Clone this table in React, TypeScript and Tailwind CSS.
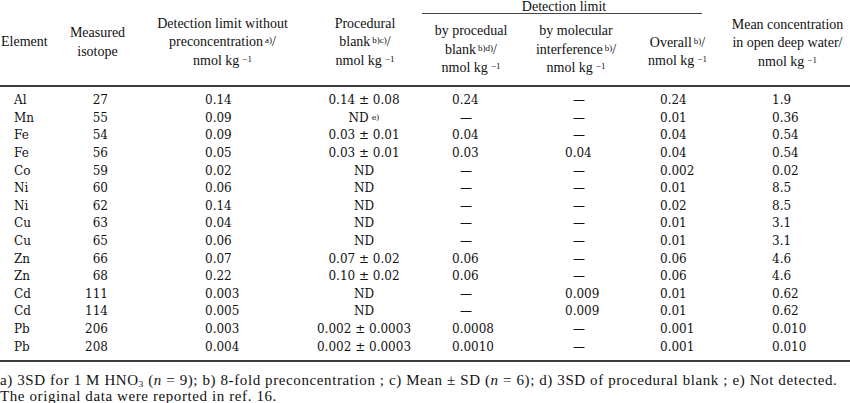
import React from "react";

const hf = { fontFamily: '"Liberation Serif", "Times New Roman", serif' };
const bf = { fontFamily: '"DejaVu Serif", "Liberation Serif", serif' };

type Row = [string, string, string, React.ReactNode, string, string, string, string];

const D = "—";
const rows: Row[] = [
  ["Al", "27", "0.14", "0.14 ± 0.08", "0.24", D, "0.24", "1.9"],
  ["Mn", "55", "0.09", (<span>ND<sup className="text-[8px] ml-[3px] relative -top-[2px]">e)</sup></span>), D, D, "0.01", "0.36"],
  ["Fe", "54", "0.09", "0.03 ± 0.01", "0.04", D, "0.04", "0.54"],
  ["Fe", "56", "0.05", "0.03 ± 0.01", "0.03", "0.04", "0.04", "0.54"],
  ["Co", "59", "0.02", "ND", D, D, "0.002", "0.02"],
  ["Ni", "60", "0.06", "ND", D, D, "0.01", "8.5"],
  ["Ni", "62", "0.14", "ND", D, D, "0.02", "8.5"],
  ["Cu", "63", "0.04", "ND", D, D, "0.01", "3.1"],
  ["Cu", "65", "0.06", "ND", D, D, "0.01", "3.1"],
  ["Zn", "66", "0.07", "0.07 ± 0.02", "0.06", D, "0.06", "4.6"],
  ["Zn", "68", "0.22", "0.10 ± 0.02", "0.06", D, "0.06", "4.6"],
  ["Cd", "111", "0.003", "ND", D, "0.009", "0.01", "0.62"],
  ["Cd", "114", "0.005", "ND", D, "0.009", "0.01", "0.62"],
  ["Pb", "206", "0.003", "0.002 ± 0.0003", "0.0008", D, "0.001", "0.010"],
  ["Pb", "208", "0.004", "0.002 ± 0.0003", "0.0010", D, "0.001", "0.010"],
];

function Sup({ children }: { children: React.ReactNode }) {
  return <sup className="text-[9px] ml-[2px] relative -top-[3px]">{children}</sup>;
}

function Unit() {
  return (
    <span>
      nmol kg<sup className="text-[9px] ml-[3px] relative -top-[3px]">−1</sup>
    </span>
  );
}

const cols = "grid grid-cols-[60px_75px_175px_110px_102px_108px_95px_125px]";

export default function App() {
  return (
    <div className="w-[850px] h-[403px] bg-white text-[#111] overflow-hidden">
      {/* header */}
      <div className={`${cols} grid-rows-[15px_70px] text-[14px] leading-[18.5px] text-center`} style={hf}>
        <div className="row-span-2 flex items-center justify-start pl-[1px]">Element</div>
        <div className="row-span-2 flex items-center justify-center">
          <div>Measured<br />isotope</div>
        </div>
        <div className="row-span-2 flex items-center justify-center">
          <div>
            Detection limit without
            <br />
            preconcentration<Sup>a)</Sup>/
            <br />
            <Unit />
          </div>
        </div>
        <div className="row-span-2 flex items-center justify-center">
          <div>
            Procedural
            <br />
            blank<Sup>b)c)</Sup>/
            <br />
            <Unit />
          </div>
        </div>
        <div className="col-span-3 pl-[2px] pr-[23px]">
          <div className="border-b border-[#444] h-[14px] leading-[14px] pl-[4px]">Detection limit</div>
        </div>
        <div className="row-span-2 flex items-center justify-center pt-[2px]">
          <div>
            Mean concentration
            <br />
            in open deep water/
            <br />
            <Unit />
          </div>
        </div>
        <div className="flex items-center justify-center">
          <div>
            by procedual
            <br />
            blank<Sup>b)d)</Sup>/
            <br />
            <Unit />
          </div>
        </div>
        <div className="flex items-center justify-center">
          <div>
            by molecular
            <br />
            interference<Sup>b)</Sup>/
            <br />
            <Unit />
          </div>
        </div>
        <div className="flex items-center justify-center pt-[4px]">
          <div>
            Overall<Sup>b)</Sup>/
            <br />
            <Unit />
          </div>
        </div>
      </div>
      <div className="h-[2px] bg-[#3c3c3c]" />
      {/* body */}
      <div className="pt-[5px] pb-[4px] text-[12px]" style={bf}>
        {rows.map((r, i) => (
          <div key={i} className={`${cols} h-[17.6px] items-center leading-[17px]`}>
            <div className="pl-[14px]">{r[0]}</div>
            <div className="text-right pr-[27px]">{r[1]}</div>
            <div className="pl-[70px]">{r[2]}</div>
            <div className="text-center pr-[2px]">{r[3]}</div>
            <div className={r[4] === D ? "pl-[40px]" : "pl-[32px]"}>{r[4]}</div>
            <div className={r[5] === D ? "pl-[51px]" : "pl-[43px]"}>{r[5]}</div>
            <div className="pl-[30px]">{r[6]}</div>
            <div className="pl-[47px]">{r[7]}</div>
          </div>
        ))}
      </div>
      <div className="h-[2px] bg-[#3c3c3c]" />
      {/* footer */}
      <div className="pt-[10px] text-[15px] leading-[16px] tracking-[0.6px]" style={hf}>
        <div className="whitespace-nowrap">
          a) 3SD for 1 M HNO<sub className="text-[9px]">3</sub> (<i>n</i> = 9); b) 8-fold preconcentration ; c) Mean ± SD (<i>n</i> = 6); d) 3SD of procedural blank ; e) Not detected.
        </div>
        <div>The original data were reported in ref. 16.</div>
      </div>
    </div>
  );
}
